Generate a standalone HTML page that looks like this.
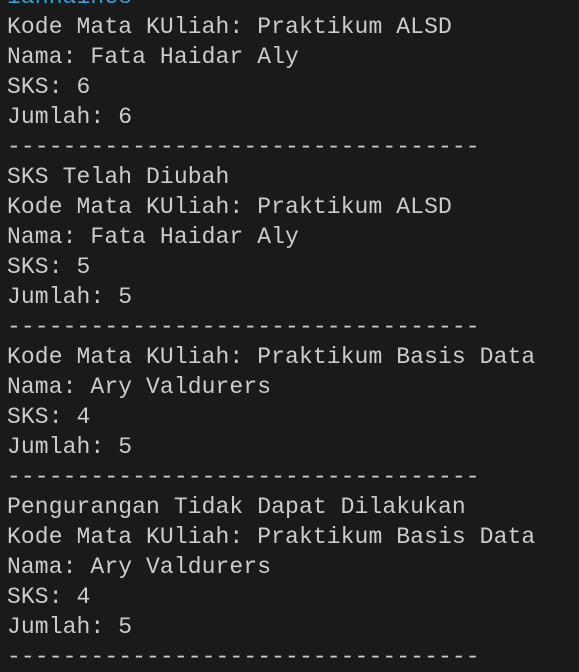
<!DOCTYPE html>
<html><head><style>
html,body{margin:0;padding:0;background:#1a1a1a;width:579px;height:663px;overflow:hidden}
pre{margin:0;position:absolute;left:7px;top:-18px;font-family:"Liberation Mono",monospace;font-size:23px;line-height:30px;color:#cccccc;letter-spacing:0.1px}
.c{color:#3b9fd6}
</style></head><body>
<pre><span class="c">iahhaines</span>
Kode Mata KUliah: Praktikum ALSD
Nama: Fata Haidar Aly
SKS: 6
Jumlah: 6
----------------------------------
SKS Telah Diubah
Kode Mata KUliah: Praktikum ALSD
Nama: Fata Haidar Aly
SKS: 5
Jumlah: 5
----------------------------------
Kode Mata KUliah: Praktikum Basis Data
Nama: Ary Valdurers
SKS: 4
Jumlah: 5
----------------------------------
Pengurangan Tidak Dapat Dilakukan
Kode Mata KUliah: Praktikum Basis Data
Nama: Ary Valdurers
SKS: 4
Jumlah: 5
----------------------------------</pre>
</body></html>
